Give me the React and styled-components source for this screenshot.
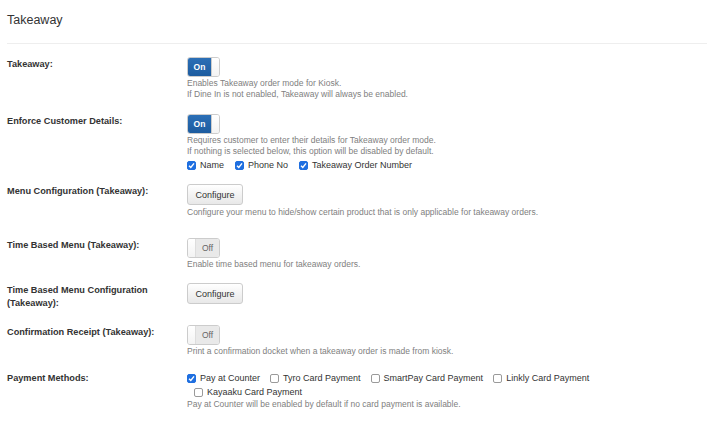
import styled, { createGlobalStyle } from "styled-components"

const GlobalStyle = createGlobalStyle`
    body {
        margin: 0;
        background: #fff;
        font-family: "Liberation Sans", Arial, sans-serif;
        color: #333;
    }
`

const Page = styled.div`
    padding: 12px 10px 0 7px;
`

const Title = styled.h3`
    margin: 0;
    font-size: 12.5px;
    line-height: 16px;
    font-weight: normal;
    color: #333;
`

const Divider = styled.hr`
    margin: 15px 0 13px;
    border: 0;
    border-top: 1px solid #eee;
`

const Form = styled.div`
    display: flex;
    flex-direction: column;
`

const Row = styled.div`
    display: grid;
    grid-template-columns: 180px 500px;
    margin-bottom: ${p => p.$space || 15}px;
`

const Label = styled.div`
    font-size: 9.2px;
    font-weight: bold;
    line-height: 13px;
    padding-top: 1px;
    padding-right: 20px;
    color: #333;
`

const Field = styled.div`
    display: flex;
    flex-direction: column;
    align-items: flex-start;
`

const Help = styled.div`
    font-size: 8.5px;
    line-height: 11px;
    color: #808080;
    margin-top: ${p => p.$top || 0}px;
`

const Switch = styled.div`
    display: flex;
    width: 33px;
    height: 20px;
    box-sizing: border-box;
    border: 1px solid #ccc;
    border-radius: 3px;
    overflow: hidden;
    flex-direction: ${p => (p.$on ? "row" : "row-reverse")};
`

const SwitchLabel = styled.div`
    flex: 1;
    display: flex;
    align-items: center;
    justify-content: center;
    font-size: 8.5px;
    font-weight: ${p => (p.$on ? "bold" : "normal")};
    color: ${p => (p.$on ? "#fff" : "#666")};
    background: ${p => (p.$on ? "linear-gradient(#2b6fb6, #1d5c9f)" : "#e9e9e9")};
`

const Knob = styled.div`
    width: 7px;
    background: linear-gradient(#fff, #f3f3f3);
    border-left: ${p => (p.$on ? "1px solid #ccc" : "0")};
    border-right: ${p => (p.$on ? "0" : "1px solid #ddd")};
`

const Button = styled.div`
    width: 56px;
    height: 21px;
    box-sizing: border-box;
    display: flex;
    align-items: center;
    justify-content: center;
    font-size: 9px;
    color: #333;
    border: 1px solid #ccc;
    border-radius: 3px;
    background: linear-gradient(#fff, #e8e8e8);
`

const Checks = styled.div`
    display: flex;
    flex-wrap: wrap;
    margin-top: ${p => p.$top || 0}px;
`

const Check = styled.label`
    display: flex;
    align-items: center;
    height: 14px;
    font-size: 9px;
    color: #333;
    margin-right: ${p => p.$right ?? 8}px;
    & + & {
        margin-left: ${p => p.$left ?? 0}px;
    }
`

const Box = styled.span`
    width: 9px;
    height: 9px;
    box-sizing: border-box;
    border-radius: 2px;
    margin-right: 4px;
    display: flex;
    align-items: center;
    justify-content: center;
    background: ${p => (p.$checked ? "#1f6fe0" : "#fff")};
    border: 1px solid ${p => (p.$checked ? "#1f6fe0" : "#9a9a9a")};
`

const Toggle = ({ on }) => (
    <Switch $on={on}>
        <SwitchLabel $on={on}>{on ? "On" : "Off"}</SwitchLabel>
        <Knob $on={on} />
    </Switch>
)

const CheckItem = ({ checked, children, ...rest }) => (
    <Check {...rest}>
        <Box $checked={checked}>
            {checked && (
                <svg width="7" height="7" viewBox="0 0 10 10">
                    <path d="M1.5 5.2 L4 7.8 L8.6 2" fill="none" stroke="#fff" strokeWidth="2" />
                </svg>
            )}
        </Box>
        {children}
    </Check>
)

const payments = [
    { name: "Pay at Counter", checked: true },
    { name: "Tyro Card Payment" },
    { name: "SmartPay Card Payment" },
    { name: "Linkly Card Payment" },
    { name: "Kayaaku Card Payment" },
]

const App = () => {
    return (
        <Page>
            <GlobalStyle />
            <Title>Takeaway</Title>
            <Divider />
            <Form>
                <Row $space={14}>
                    <Label>Takeaway:</Label>
                    <Field>
                        <Toggle on />
                        <Help $top={1}>Enables Takeaway order mode for Kiosk.</Help>
                        <Help>If Dine In is not enabled, Takeaway will always be enabled.</Help>
                    </Field>
                </Row>
                <Row $space={12}>
                    <Label>Enforce Customer Details:</Label>
                    <Field>
                        <Toggle on />
                        <Help $top={1}>Requires customer to enter their details for Takeaway order mode.</Help>
                        <Help>If nothing is selected below, this option will be disabled by default.</Help>
                        <Checks $top={1}>
                            <CheckItem checked $right={4}>Name</CheckItem>
                            <CheckItem checked $right={4}>Phone No</CheckItem>
                            <CheckItem checked $right={4}>Takeaway Order Number</CheckItem>
                        </Checks>
                    </Field>
                </Row>
                <Row $space={20}>
                    <Label>Menu Configuration (Takeaway):</Label>
                    <Field>
                        <Button>Configure</Button>
                        <Help $top={2}>Configure your menu to hide/show certain product that is only applicable for takeaway orders.</Help>
                    </Field>
                </Row>
                <Row $space={13}>
                    <Label>Time Based Menu (Takeaway):</Label>
                    <Field>
                        <Toggle />
                        <Help $top={1}>Enable time based menu for takeaway orders.</Help>
                    </Field>
                </Row>
                <Row $space={15}>
                    <Label>Time Based Menu Configuration (Takeaway):</Label>
                    <Field>
                        <Button>Configure</Button>
                    </Field>
                </Row>
                <Row $space={14}>
                    <Label>Confirmation Receipt (Takeaway):</Label>
                    <Field>
                        <Toggle />
                        <Help $top={1}>Print a confirmation docket when a takeaway order is made from kiosk.</Help>
                    </Field>
                </Row>
                <Row>
                    <Label>Payment Methods:</Label>
                    <Field>
                        <Checks>
                            {payments.map(p => (
                                <CheckItem key={p.name} checked={p.checked} $right={3} $left={7}>
                                    {p.name}
                                </CheckItem>
                            ))}
                        </Checks>
                        <Help>Pay at Counter will be enabled by default if no card payment is available.</Help>
                    </Field>
                </Row>
            </Form>
        </Page>
    )
}

export default App
